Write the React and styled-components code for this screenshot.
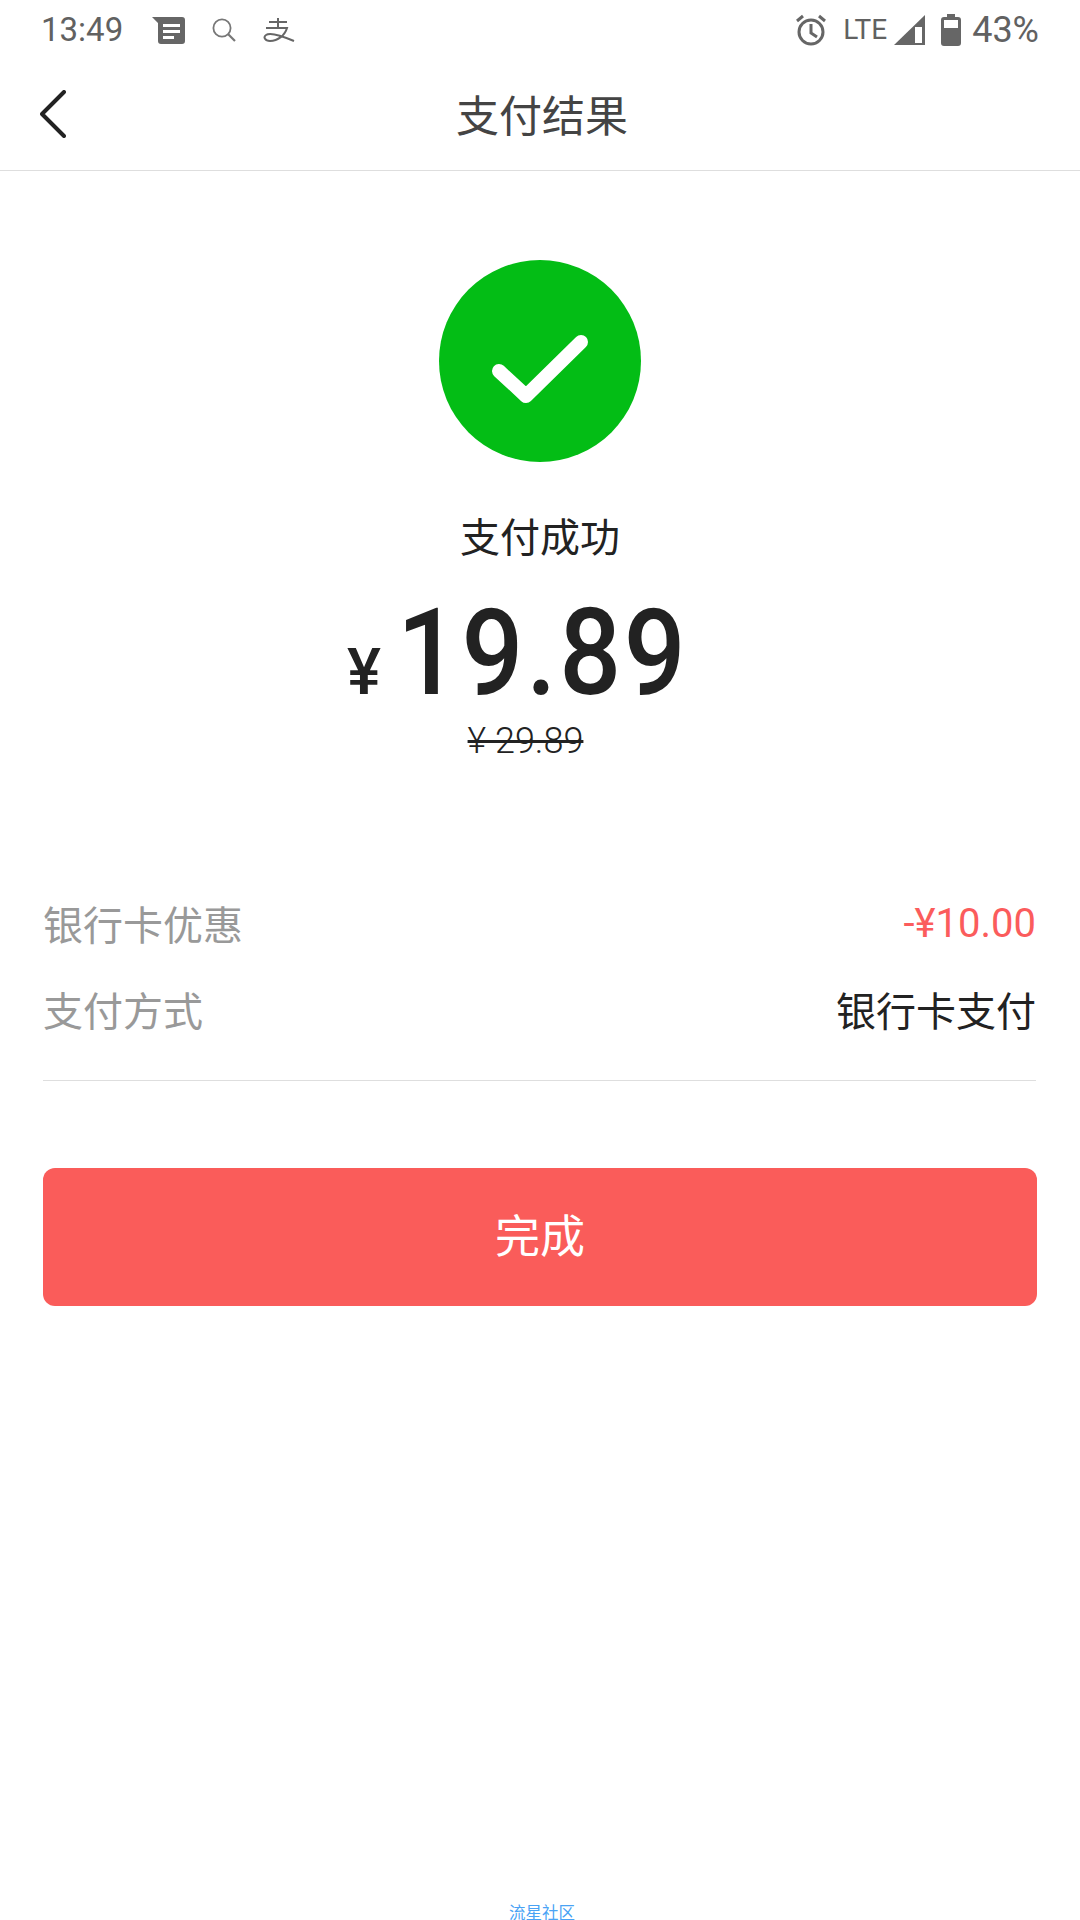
import React from "react";
import styled, { createGlobalStyle } from "styled-components";

const GlobalStyle = createGlobalStyle`
  html, body {
    margin: 0;
    padding: 0;
    background: #fff;
  }
  * {
    box-sizing: border-box;
  }
`;

const Page = styled.div`
  width: 1080px;
  height: 1920px;
  overflow: hidden;
  display: flex;
  flex-direction: column;
  background: #fff;
  font-family: Roboto, "Noto Sans CJK SC", sans-serif;
`;

const StatusBar = styled.div`
  height: 60px;
  padding: 0 41px;
  display: flex;
  align-items: center;
  justify-content: space-between;
  color: #616161;
`;

const StatusGroup = styled.div`
  display: flex;
  align-items: center;
`;

const StatusText = styled.span`
  font-size: ${({ size }) => size || 33}px;
  font-weight: 400;
  line-height: 60px;
  margin-left: ${({ left }) => left || 0}px;
`;

const StatusIcon = styled.svg`
  display: block;
  flex: none;
  margin-left: ${({ left }) => left || 0}px;
`;

const Header = styled.header`
  height: 111px;
  padding: 0 40px;
  display: flex;
  align-items: center;
  border-bottom: 1px solid #dedede;
`;

const BackIcon = styled.svg`
  display: block;
  margin-bottom: 2px;
`;

const Title = styled.h1`
  flex: 1;
  margin: 0 0 0 -22px;
  padding-bottom: 4px;
  text-align: center;
  font-size: 43px;
  font-weight: 400;
  color: #444;
`;

const Result = styled.section`
  padding-top: 89px;
  display: flex;
  flex-direction: column;
  align-items: center;
`;

const SuccessBadge = styled.div`
  width: 202px;
  height: 202px;
  border-radius: 50%;
  background: #03bd15;
  display: flex;
  align-items: center;
  justify-content: center;
`;

const CheckMark = styled.svg`
  display: block;
  margin-top: 16px;
`;

const ResultLabel = styled.div`
  margin-top: 52px;
  font-size: 40px;
  line-height: 50px;
  color: #222;
`;

const Amount = styled.div`
  margin-top: 39px;
  padding-right: 52px;
  height: 100px;
  display: flex;
  align-items: baseline;
  color: #222;
`;

const Currency = styled.span`
  font-size: 64px;
  line-height: 64px;
  font-weight: 500;
  margin-right: 16px;
`;

const AmountValue = styled.span`
  display: inline-block;
  width: 284px;
  white-space: nowrap;
  font-size: 121px;
  font-weight: 500;
  line-height: 100px;
  letter-spacing: 3px;
  transform: scaleX(0.9);
  transform-origin: left center;
`;

const OldPrice = styled.div`
  margin-top: 16px;
  margin-right: 29px;
  font-size: 36px;
  line-height: 44px;
  font-weight: 300;
  color: #222;
  text-decoration: line-through;
`;

const Details = styled.section`
  margin: 135px 44px 0 43px;
  padding-bottom: 46px;
  border-bottom: 1px solid #dedede;
  display: flex;
  flex-direction: column;
  gap: 36px;
`;

const DetailRow = styled.div`
  height: 50px;
  display: flex;
  align-items: center;
  justify-content: space-between;
  font-size: 40px;
`;

const DetailLabel = styled.span`
  color: #999;
`;

const DetailValue = styled.span`
  color: ${({ accent }) => (accent ? "#fb5c5c" : "#222")};
`;

const DoneButton = styled.button`
  display: block;
  margin: 87px 43px 0;
  padding: 0 0 7px;
  width: 994px;
  height: 138px;
  border: 0;
  border-radius: 12px;
  background: #fa5c5a;
  color: #fff;
  font-family: inherit;
  font-size: 45px;
`;

const Footer = styled.footer`
  margin-top: auto;
  padding-left: 4px;
  height: 13px;
  text-align: center;
  font-size: 16.5px;
  line-height: 13px;
  color: #4aa3f5;
`;

const App = () => (
  <Page>
    <GlobalStyle />
    <StatusBar>
      <StatusGroup>
        <StatusText>13:49</StatusText>
        <StatusIcon left={29} width="33" height="28" viewBox="0 0 33 28">
          <path d="M0 1h30a3 3 0 0 1 3 3v21a3 3 0 0 1-3 3H9a3 3 0 0 1-3-3V7z" fill="#666" />
          <path d="M11 8h17v3H11zM11 14h17v3H11zM11 20h11v3H11z" fill="#fff" />
        </StatusIcon>
        <StatusIcon left={27} width="24" height="24" viewBox="0 0 24 24" fill="none" stroke="#777" strokeWidth="1.8">
          <circle cx="10" cy="10" r="8.6" />
          <path d="M16 16l7 7" strokeWidth="2.2" />
        </StatusIcon>
        <StatusIcon left={27} width="32" height="26" viewBox="0 0 32 26" fill="none" stroke="#666" strokeWidth="2">
          <path d="M15 1v9M6 5h18M3 11h21c-2 7-9 13-17 13C2 24 0 20 3 18c4-3 14 0 28 6" />
        </StatusIcon>
      </StatusGroup>
      <StatusGroup>
        <StatusIcon width="32" height="32" viewBox="0 0 32 32" fill="none" stroke="#666" strokeWidth="3">
          <circle cx="16" cy="18" r="12" />
          <path d="M16 10v9l6 4M2 7l6-5M30 7l-6-5" />
        </StatusIcon>
        <StatusText left={16} size={28}>LTE</StatusText>
        <StatusIcon left={6} width="32" height="32" viewBox="0 0 32 32">
          <path d="M32 1v30H1z" fill="#666" />
          <path d="M22 13h7v16h-7z" fill="#fff" />
        </StatusIcon>
        <StatusIcon left={16} width="20" height="32" viewBox="0 0 20 32">
          <path d="M6 0h8v3h3a3 3 0 0 1 3 3v23a3 3 0 0 1-3 3H3a3 3 0 0 1-3-3V6a3 3 0 0 1 3-3h3z" fill="#666" />
          <path d="M3 6h14v8H3z" fill="#fff" />
        </StatusIcon>
        <StatusText left={11} size={36}>43%</StatusText>
      </StatusGroup>
    </StatusBar>

    <Header>
      <BackIcon width="26" height="48" viewBox="0 0 26 48" fill="none" stroke="#222" strokeWidth="4" strokeLinecap="round" strokeLinejoin="round">
        <path d="M24 2L2 24l22 22" />
      </BackIcon>
      <Title>支付结果</Title>
    </Header>

    <Result>
      <SuccessBadge>
        <CheckMark width="98" height="70" viewBox="0 0 98 70" fill="none" stroke="#fff" strokeWidth="14" strokeLinecap="round" strokeLinejoin="round">
          <path d="M8 37l27 25L90 8" />
        </CheckMark>
      </SuccessBadge>
      <ResultLabel>支付成功</ResultLabel>
      <Amount>
        <Currency>¥</Currency>
        <AmountValue>19.89</AmountValue>
      </Amount>
      <OldPrice>¥ 29.89</OldPrice>
    </Result>

    <Details>
      <DetailRow>
        <DetailLabel>银行卡优惠</DetailLabel>
        <DetailValue accent>-¥10.00</DetailValue>
      </DetailRow>
      <DetailRow>
        <DetailLabel>支付方式</DetailLabel>
        <DetailValue>银行卡支付</DetailValue>
      </DetailRow>
    </Details>

    <DoneButton>完成</DoneButton>

    <Footer>流星社区</Footer>
  </Page>
);

export default App;
